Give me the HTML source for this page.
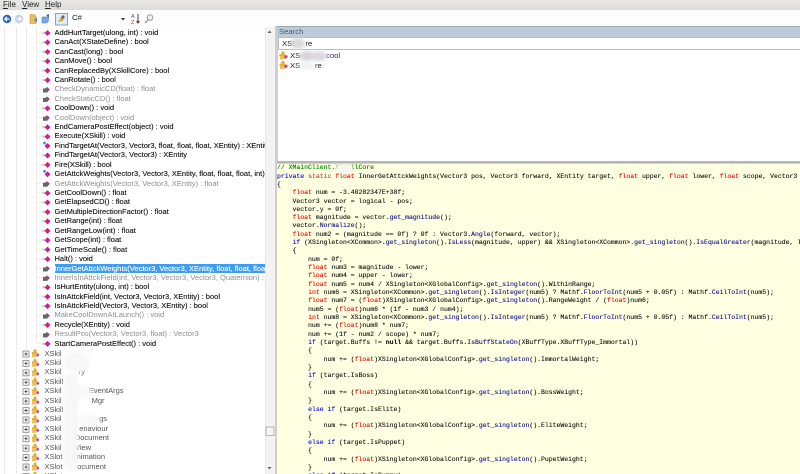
<!DOCTYPE html>
<html><head><meta charset="utf-8">
<style>
html,body{margin:0;padding:0;width:800px;height:474px;overflow:hidden;background:#fff}
*{box-sizing:border-box}
.abs{position:absolute}
#wrap{position:absolute;left:0;top:0;width:800px;height:474px;overflow:hidden;font-family:"Liberation Sans",sans-serif;filter:blur(.25px)}
#menu{left:0;top:0;width:800px;height:10px;background:linear-gradient(#e9e8e6,#dddcda);font-size:8px;line-height:10px;color:#222}
#menu span{position:absolute;top:0}
#tool{left:0;top:10px;width:800px;height:16px;background:#fdfdfd}
#tree{left:0;top:27px;width:265px;height:447px;background:#fff;overflow:hidden}
.vl{position:absolute;top:0;bottom:0;width:1px;background:#ebebeb}
.r{position:absolute;left:54.5px;height:9.42px;font-size:7.5px;line-height:9.42px;color:#111;white-space:nowrap;width:210px;overflow:hidden;-webkit-text-stroke:.12px currentColor}
.g{color:#8f8f8f;-webkit-text-stroke:0}
.sel{background:#3f9cf2;color:#fff}
.n,.e{position:absolute;height:9.42px;font-size:7.5px;line-height:9.42px;color:#555;white-space:nowrap}
.n{left:44.5px}
#sb{left:265px;top:27px;width:11px;height:447px;background:#f3f3f3;border-left:1px solid #e8e8e8}
#split{left:275px;top:26px;width:3px;height:448px;background:#cfcfcf}
#sh{left:277px;top:26px;width:523px;height:11px;background:#bccbd9;border-top:1px solid #9aa8b5;font-size:7.7px;line-height:10px;color:#4a5a68;padding-left:2px}
#si{left:278px;top:37px;width:522px;height:13px;background:#fff;border:1px solid #bdbdbd;border-width:1px 0 1px 1px;font-size:7.7px;line-height:11px;color:#222}
#si span,#sr span{position:absolute;white-space:nowrap}
#sr{left:278px;top:50px;width:522px;height:111px;background:#fff;font-size:7.7px;color:#222}
#sep{left:277px;top:161px;width:523px;height:3px;background:#b5b5b5;border-bottom:1px solid #d0d0d0}
#code{left:277px;top:164px;width:523px;height:310px;background:#ffffe1;overflow:hidden}
pre{margin:0;position:absolute;left:0;top:0.2px;font-family:"Liberation Mono",monospace;font-size:6.48px;line-height:8.33px;color:#111;white-space:pre;-webkit-text-stroke:.12px currentColor}
.k{color:#0000e0}.s{color:#b04a4a}.t{color:#f00000}.m{color:#10108a}.c{color:#008000}
.b{position:absolute;background:#fff;border-radius:50%;filter:blur(1.5px)}
.bg{position:absolute;background:#dcdcdc;border-radius:50%;filter:blur(1.5px)}
svg{position:absolute;overflow:visible}
</style></head><body><div id="wrap">

<div id="menu" class="abs"><span style="left:3px"><u>F</u>ile</span><span style="left:22px"><u>V</u>iew</span><span style="left:45px"><u>H</u>elp</span></div>
<div id="tool" class="abs"></div>
<svg style="left:0;top:0.5px" width="170" height="28">
<circle cx="7" cy="18" r="4.2" fill="#2a62c0"/><path d="M9.5 18H5M7 15.8L4.8 18L7 20.2" stroke="#fff" stroke-width="1.2" fill="none"/>
<circle cx="19" cy="18" r="4.2" fill="#c3cfe4"/><path d="M16.5 18H21M19 15.8L21.2 18L19 20.2" stroke="#fff" stroke-width="1.2" fill="none"/>
<path d="M30 13.5h4l2 1.5v7.5h-6z" fill="#eebb55" stroke="#b98a30" stroke-width=".5"/><path d="M34 19l3-2.5v5z" fill="#4a8ae0"/>
<path d="M42 16h5l1.5-2v6l-1.5 2h-5z" fill="#7aa8dc" stroke="#4878b0" stroke-width=".5"/><path d="M46 14l3-1v4z" fill="#3a78c8"/>
<rect x="55.5" y="12.5" width="12" height="11.5" fill="#dfeaf7" stroke="#7ea6d4"/>
<path d="M58 21l3-5 3 1-1 3z" fill="#d8a838"/><circle cx="63" cy="16" r="1.6" fill="#666"/>
<path d="M121 17h4l-2 2.5z" fill="#333"/>
<text x="131" y="17" font-size="5.5" fill="#2a62c0" font-family="Liberation Sans">A</text><text x="131" y="23" font-size="5.5" fill="#b03030" font-family="Liberation Sans">Z</text><path d="M138 13v9M136.5 20l1.5 2 1.5-2" stroke="#333" stroke-width=".9" fill="none"/>
<circle cx="150" cy="16.5" r="2.8" fill="#eef2f6" stroke="#9a9a9a"/><path d="M148 19l-3 3" stroke="#999" stroke-width="1.3"/>
</svg>
<div class="abs" style="left:72px;top:13px;font-size:7.7px;line-height:10px;color:#222">C#</div>

<div id="tree" class="abs">
<div class="vl" style="left:4px"></div><div class="vl" style="left:16px"></div><div class="vl" style="left:26px"></div><div class="vl" style="left:36px;height:316px;bottom:auto"></div>
</div>

<svg style="left:0;top:0" width="1" height="1"><defs>
<g id="p"><rect x="0" y="4.500" width="5.500" height=".7" fill="#e4e8e2"/><rect x="5.500" y="3.800" width="2.500" height="2.200" fill="#b4dcb4"/><path d="M10.500 2l3 3-3 3-3-3z" fill="#d6189a"/></g>
<g id="d"><rect x="0" y="4.500" width="6" height=".7" fill="#e4e8e2"/><path d="M10.500 2l3 3-3 3-3-3z" fill="#d6189a"/><circle cx="7.500" cy="2" r="1.400" fill="#3a8ed8"/></g>
<g id="h"><rect x="0" y="4.500" width="6" height=".7" fill="#e6e6e6"/><path d="M10 2.500l3 2.500-3 3-3-3z" fill="#9a4a8a"/><rect x="6" y="4" width="4.500" height="4" fill="#666"/></g>
<g id="x"><rect x="1" y="2" width="6" height="6" fill="#f4f4f4" stroke="#8a8a8a" stroke-width=".8"/><path d="M2.500 5h3M4 3.500v3" stroke="#222" stroke-width=".7"/><path d="M10 3h5l1 2h-6z" fill="#e3b038"/><circle cx="13" cy="2" r="1.600" fill="#e3b038"/><rect x="10" y="5" width="4" height="3.500" fill="#efc24a"/><path d="M14 5.500l2.500-1 .8 2-2.300 1.500z" fill="#c83ca8"/></g>
</defs></svg>

<div class="abs" style="left:0;top:0;width:265px;height:474px;overflow:hidden">
<div class="abs" style="left:0;top:0.5px;width:265px;height:474px">
<div class="r" style="top:27.3px">AddHurtTarget(ulong, int) : void</div>
<div class="r" style="top:36.7px">CanAct(XStateDefine) : bool</div>
<div class="r" style="top:46.1px">CanCast(long) : bool</div>
<div class="r" style="top:55.6px">CanMove() : bool</div>
<div class="r" style="top:65px">CanReplacedBy(XSkillCore) : bool</div>
<div class="r" style="top:74.4px">CanRotate() : bool</div>
<div class="r g" style="top:83.8px">CheckDynamicCD(float) : float</div>
<div class="r g" style="top:93.2px">CheckStaticCD() : float</div>
<div class="r" style="top:102.7px">CoolDown() : void</div>
<div class="r g" style="top:112.1px">CoolDown(object) : void</div>
<div class="r" style="top:121.5px">EndCameraPostEffect(object) : void</div>
<div class="r" style="top:130.9px">Execute(XSkill) : void</div>
<div class="r" style="top:140.3px">FindTargetAt(Vector3, Vector3, float, float, float, XEntity) : XEntity</div>
<div class="r" style="top:149.8px">FindTargetAt(Vector3, Vector3) : XEntity</div>
<div class="r" style="top:159.2px">Fire(XSkill) : bool</div>
<div class="r" style="top:168.6px">GetAttckWeights(Vector3, Vector3, XEntity, float, float, float, int) : float</div>
<div class="r g" style="top:178px">GetAttckWeights(Vector3, Vector3, XEntity) : float</div>
<div class="r" style="top:187.4px">GetCoolDown() : float</div>
<div class="r" style="top:196.9px">GetElapsedCD() : float</div>
<div class="r" style="top:206.3px">GetMultipleDirectionFactor() : float</div>
<div class="r" style="top:215.7px">GetRange(int) : float</div>
<div class="r" style="top:225.1px">GetRangeLow(int) : float</div>
<div class="r" style="top:234.5px">GetScope(int) : float</div>
<div class="r" style="top:244px">GetTimeScale() : float</div>
<div class="r" style="top:253.4px">Halt() : void</div>
<div class="r sel" style="top:263px;height:9.400px">InnerGetAttckWeights(Vector3, Vector3, XEntity, float, float, float, float, Vector3)</div>
<div class="r g" style="top:272.200px">InnerIsInAttckField(int, Vector3, Vector3, Vector3, Quaternion) : bool</div>
<div class="r" style="top:281.700px">IsHurtEntity(ulong, int) : bool</div>
<div class="r" style="top:291.100px">IsInAttckField(int, Vector3, Vector3, XEntity) : bool</div>
<div class="r" style="top:300.500px">IsInAttckField(Vector3, Vector3, XEntity) : bool</div>
<div class="r g" style="top:309.900px">MakeCoolDownAtLaunch() : void</div>
<div class="r" style="top:319.300px">Recycle(XEntity) : void</div>
<div class="r g" style="top:328.800px">ResultPos(Vector3, Vector3, float) : Vector3</div>
<div class="r" style="top:338.200px">StartCameraPostEffect() : void</div>

<div class="n" style="top:348px">XSkil</div>
<div class="n" style="top:357.400px">XSkil</div>
<div class="n" style="top:366.800px">XSkil</div><div class="e" style="top:366.800px;right:180px">ry</div>
<div class="n" style="top:376.300px">XSkill</div>
<div class="n" style="top:385.700px">XSkil</div><div class="e" style="top:385.700px;right:141.500px">EventArgs</div>
<div class="n" style="top:395.100px">XSkil</div><div class="e" style="top:395.100px;right:160.500px">Mgr</div>
<div class="n" style="top:404.500px">XSkill</div>
<div class="n" style="top:413.900px">XSkil</div><div class="e" style="top:413.900px;right:158px">gs</div>
<div class="n" style="top:423.400px">XSkil</div><div class="e" style="top:423.400px;right:157px">enaviour</div>
<div class="n" style="top:432.800px">XSkil</div><div class="e" style="top:432.800px;right:156px">Document</div>
<div class="n" style="top:442.200px">XSkil</div><div class="e" style="top:442.200px;right:174px">View</div>
<div class="n" style="top:451.600px">XSlot</div><div class="e" style="top:451.600px;right:160px">nimation</div>
<div class="n" style="top:461px">XSlot</div><div class="e" style="top:461px;right:159px">ocument</div>
<div class="n" style="top:470.500px">XSlot</div>

<svg style="left:0;top:0" width="265" height="474" viewBox="0 0 265 474">
<g transform="translate(37,27)">
<use href="#p" y="0"/><use href="#p" y="9.420"/><use href="#p" y="18.840"/><use href="#p" y="28.260"/><use href="#p" y="37.680"/><use href="#p" y="47.100"/>
<use href="#h" y="56.520"/><use href="#h" y="65.940"/><use href="#p" y="75.360"/><use href="#h" y="84.780"/><use href="#p" y="94.200"/><use href="#p" y="103.620"/>
<use href="#d" y="113.040"/><use href="#p" y="122.460"/><use href="#p" y="131.880"/><use href="#d" y="141.300"/><use href="#h" y="150.720"/><use href="#p" y="160.140"/>
<use href="#p" y="169.560"/><use href="#p" y="178.980"/><use href="#p" y="188.400"/><use href="#p" y="197.820"/><use href="#p" y="207.240"/><use href="#p" y="216.660"/>
<use href="#p" y="226.080"/><use href="#h" y="235.500"/><use href="#h" y="244.920"/><use href="#p" y="254.340"/><use href="#p" y="263.760"/><use href="#p" y="273.180"/>
<use href="#h" y="282.600"/><use href="#p" y="292.020"/><use href="#h" y="301.440"/><use href="#p" y="310.860"/>
</g>
<g transform="translate(22,348)">
<use href="#x" y="0"/><use href="#x" y="9.420"/><use href="#x" y="18.840"/><use href="#x" y="28.260"/><use href="#x" y="37.680"/><use href="#x" y="47.100"/><use href="#x" y="56.520"/><use href="#x" y="65.940"/><use href="#x" y="75.360"/><use href="#x" y="84.780"/><use href="#x" y="94.200"/><use href="#x" y="103.620"/><use href="#x" y="113.040"/><use href="#x" y="122.460"/>
</g>
</svg>
<div class="bg" style="left:64px;top:350px;width:26px;height:22px;background:#f8f8f8"></div>
<div class="bg" style="left:64px;top:372px;width:14px;height:98px;border-radius:7px;background:#f7f7f7"></div>
<div class="bg" style="left:72px;top:384px;width:20px;height:14px;background:#f8f8f8"></div>
<div class="bg" style="left:78px;top:414px;width:22px;height:10px;background:#f8f8f8"></div>
</div>
</div>

<div id="sb" class="abs"></div>
<svg style="left:265px;top:27px" width="11" height="447">
<path d="M2.500 6L4.500 3.500L6.500 6z" fill="#606060"/>
<rect x="1" y="400" width="8" height="8.500" fill="#f4f4f4" stroke="#9a9a9a" stroke-width=".7"/>
<path d="M2.500 440L4.500 442.500L6.500 440z" fill="#606060"/>
</svg>
<div id="split" class="abs"></div>

<div id="sh" class="abs">Search</div>
<div id="si" class="abs"><span style="left:3px;top:0">XSI</span><span style="left:26.500px;top:0">re</span></div>
<div class="bg" style="left:291px;top:38px;width:14px;height:11px;background:#dadada"></div>
<div id="sr" class="abs">
<span style="left:12px;top:1px;line-height:9.500px">XS</span><span style="left:48px;top:1px;line-height:9.500px;color:#402060">cool</span>
<span style="left:12px;top:10.500px;line-height:9.500px">XS</span><span style="left:37px;top:10.500px;line-height:9.500px">re</span>
<div class="bg" style="left:21px;top:1px;width:15px;height:10px;background:#d8d4d8"></div>
<div class="bg" style="left:32px;top:1px;width:17px;height:10px;background:#dcd9dc"></div>
<div class="b" style="left:21px;top:11px;width:16px;height:9px;background:#f2f2f2"></div>
</div>
<svg style="left:279px;top:51px" width="12" height="20">
<g><path d="M1 3h5l1 2H0z" fill="#e3b038"/><circle cx="4" cy="2" r="1.600" fill="#e3b038"/><rect x="1" y="5" width="4.500" height="3.500" fill="#efc24a"/><path d="M5 5l3-1 .8 2.200-2.800 1.800z" fill="#c83ca8"/></g>
<g transform="translate(0,9.500)"><path d="M1 3h5l1 2H0z" fill="#e3b038"/><circle cx="4" cy="2" r="1.600" fill="#e3b038"/><rect x="1" y="5" width="4.500" height="3.500" fill="#efc24a"/><path d="M5 5l3-1 .8 2.200-2.800 1.800z" fill="#c83ca8"/></g>
</svg>

<div id="sep" class="abs"></div>
<div id="code" class="abs"><pre><span class="c">// XMainClient.XSkillCore</span>
<span class="k">private</span> <span class="s">static</span> <span class="t">float</span> InnerGetAttckWeights(Vector3 pos, Vector3 forward, XEntity target, <span class="t">float</span> upper, <span class="t">float</span> lower, <span class="t">float</span> scope, Vector3 logical)
{
    <span class="t">float</span> num = -3.40282347E+38f;
    Vector3 vector = logical - pos;
    vector.y = 0f;
    <span class="t">float</span> magnitude = vector.<span class="m">get_magnitude</span>();
    vector.<span class="m">Normalize</span>();
    <span class="t">float</span> num2 = (magnitude == 0f) ? 0f : Vector3.<span class="m">Angle</span>(forward, vector);
    <span class="k">if</span> (XSingleton&lt;XCommon&gt;.<span class="m">get_singleton</span>().<span class="m">IsLess</span>(magnitude, upper) &amp;&amp; XSingleton&lt;XCommon&gt;.<span class="m">get_singleton</span>().<span class="m">IsEqualGreater</span>(magnitude, lower))
    {
        num = 0f;
        <span class="t">float</span> num3 = magnitude - lower;
        <span class="t">float</span> num4 = upper - lower;
        <span class="t">float</span> num5 = num4 / XSingleton&lt;XGlobalConfig&gt;.<span class="m">get_singleton</span>().WithinRange;
        <span class="t">int</span> num6 = XSingleton&lt;XCommon&gt;.<span class="m">get_singleton</span>().<span class="m">IsInteger</span>(num5) ? Mathf.<span class="m">FloorToInt</span>(num5 + 0.05f) : Mathf.<span class="m">CeilToInt</span>(num5);
        <span class="t">float</span> num7 = (<span class="t">float</span>)XSingleton&lt;XGlobalConfig&gt;.<span class="m">get_singleton</span>().RangeWeight / (<span class="t">float</span>)num6;
        num5 = (<span class="t">float</span>)num6 * (1f - num3 / num4);
        <span class="t">int</span> num8 = XSingleton&lt;XCommon&gt;.<span class="m">get_singleton</span>().<span class="m">IsInteger</span>(num5) ? Mathf.<span class="m">FloorToInt</span>(num5 + 0.05f) : Mathf.<span class="m">CeilToInt</span>(num5);
        num += (<span class="t">float</span>)num8 * num7;
        num += (1f - num2 / scope) * num7;
        <span class="k">if</span> (target.Buffs != <b>null</b> &amp;&amp; target.Buffs.<span class="m">IsBuffStateOn</span>(XBuffType.XBuffType_Immortal))
        {
            num += (<span class="t">float</span>)XSingleton&lt;XGlobalConfig&gt;.<span class="m">get_singleton</span>().ImmortalWeight;
        }
        <span class="k">if</span> (target.IsBoss)
        {
            num += (<span class="t">float</span>)XSingleton&lt;XGlobalConfig&gt;.<span class="m">get_singleton</span>().BossWeight;
        }
        <span class="k">else if</span> (target.IsElite)
        {
            num += (<span class="t">float</span>)XSingleton&lt;XGlobalConfig&gt;.<span class="m">get_singleton</span>().EliteWeight;
        }
        <span class="k">else if</span> (target.IsPuppet)
        {
            num += (<span class="t">float</span>)XSingleton&lt;XGlobalConfig&gt;.<span class="m">get_singleton</span>().PupetWeight;
        }
        <span class="k">else if</span> (target.IsDummy)</pre>
<div class="b" style="left:58px;top:-1px;width:18px;height:10px;background:#f6f6ee"></div>
</div>
</div></body></html>
